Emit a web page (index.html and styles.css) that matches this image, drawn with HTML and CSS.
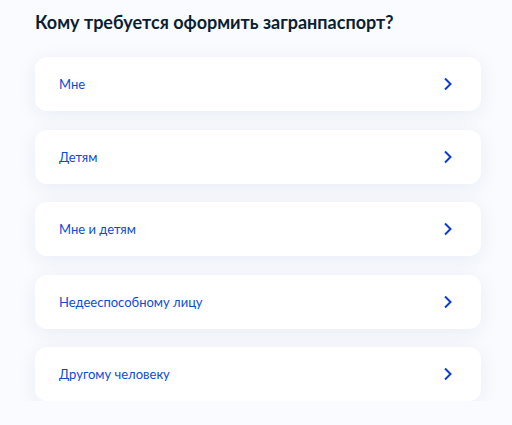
FILE: index.html
```html
<!DOCTYPE html>
<html lang="ru">
  <head>
    <meta charset="UTF-8" />
    <meta name="viewport" content="width=device-width, initial-scale=1" />
    <title>Загранпаспорт</title>
    <link rel="stylesheet" href="styles.css">
  </head>
  <body>
    <div class="container">
      <h1>Кому требуется оформить загранпаспорт?</h1>

      <div class="options">
        <a class="option" href="#">
          <span>Мне</span>
          <svg class="chevron" viewBox="0 0 10 14" width="10" height="14"><path d="M2 1.5 L7.5 7 L2 12.5" /></svg>
        </a>
        <a class="option" href="#">
          <span>Детям</span>
          <svg class="chevron" viewBox="0 0 10 14" width="10" height="14"><path d="M2 1.5 L7.5 7 L2 12.5" /></svg>
        </a>
        <a class="option" href="#">
          <span>Мне и детям</span>
          <svg class="chevron" viewBox="0 0 10 14" width="10" height="14"><path d="M2 1.5 L7.5 7 L2 12.5" /></svg>
        </a>
        <a class="option" href="#">
          <span>Недееспособному лицу</span>
          <svg class="chevron" viewBox="0 0 10 14" width="10" height="14"><path d="M2 1.5 L7.5 7 L2 12.5" /></svg>
        </a>
        <a class="option" href="#">
          <span>Другому человеку</span>
          <svg class="chevron" viewBox="0 0 10 14" width="10" height="14"><path d="M2 1.5 L7.5 7 L2 12.5" /></svg>
        </a>
      </div>
    </div>
  </body>
</html>
```

FILE: styles.css
```css
* {
  box-sizing: border-box;
}

body {
  font-family: Lato, "Noto Sans", sans-serif;
  background-color: #f9fbfe;
  color: #0b1f33;
  margin: 0;
}

.container {
  padding: 8px 31px 0 35px;
}

h1 {
  margin: 0 0 21px;
  font-size: 18px;
  font-weight: 700;
  line-height: 28px;
  color: #0b1f33;
}

.options {
  display: flex;
  flex-direction: column;
  gap: 18.5px;
}

.option {
  display: flex;
  align-items: center;
  justify-content: space-between;
  height: 54px;
  padding: 0 28px 0 24px;
  background-color: #fff;
  border-radius: 12px;
  box-shadow: 0 4px 20px rgba(0, 41, 120, 0.07);
  text-decoration: none;
  font-size: 13px;
  color: #0d4cd3;
}

.chevron path {
  fill: none;
  stroke: #0d3ccf;
  stroke-width: 2;
}
```
